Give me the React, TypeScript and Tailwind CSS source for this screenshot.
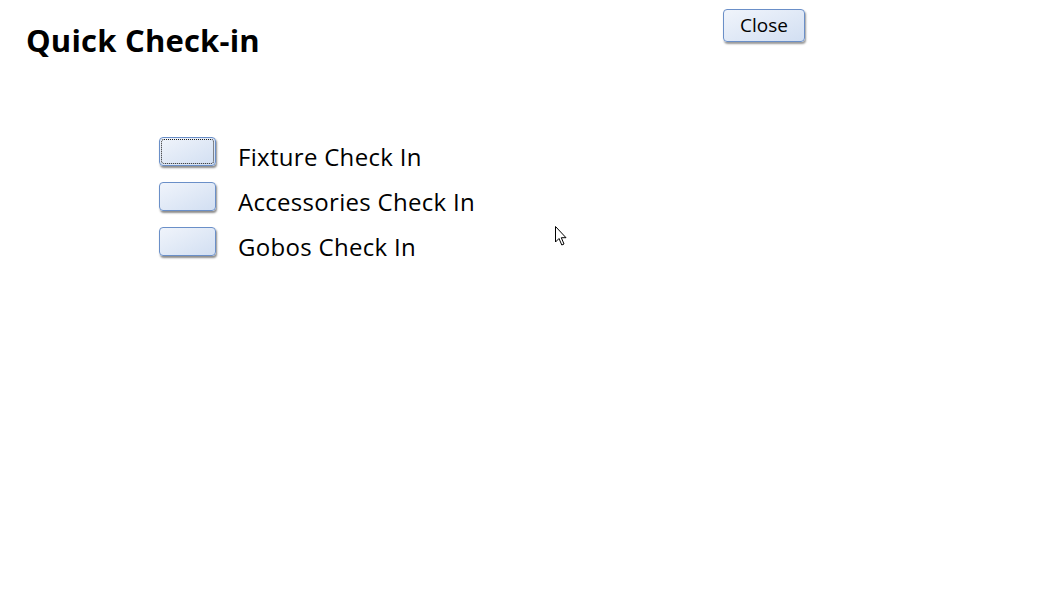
import React from "react";

const font = { fontFamily: '"Open Sans", "Noto Sans", sans-serif' };

function Btn({ focused }: { focused?: boolean }) {
  return (
    <div className="relative w-[57px] h-[29px] rounded-[4px] border border-[#6a8fc8] bg-gradient-to-br from-[#f0f4fb] to-[#d2dff2] shadow-[1px_2px_2px_rgba(0,0,0,0.45)]">
      {focused && (
        <div className="absolute inset-[1px] rounded-[3px] border border-dotted border-[#222]" />
      )}
    </div>
  );
}

export default function App() {
  const rows = ["Fixture Check In", "Accessories Check In", "Gobos Check In"];
  return (
    <div className="relative w-[1045px] h-[614px] bg-white text-black" style={font}>
      <div className="flex">
        <div className="w-[723px] pl-[26px] pt-[19px]">
          <h1 className="text-[31px] font-bold leading-[42px] tracking-[0.2px]">Quick Check-in</h1>
        </div>
        <button className="mt-[9px] w-[82px] h-[33px] rounded-[4px] border border-[#6a8fc8] bg-gradient-to-br from-[#f0f4fb] to-[#d2dff2] shadow-[1px_2px_2px_rgba(0,0,0,0.4)] text-[19px] leading-none pb-[1px]">
          Close
        </button>
      </div>
      <div className="ml-[159px] mt-[76px] flex flex-col gap-[16px]">
        {rows.map((r, i) => (
          <div key={r} className="flex items-center h-[29px]">
            <Btn focused={i === 0} />
            <span className="relative top-[5px] ml-[22px] text-[24px] leading-[29px] tracking-[0.3px]">{r}</span>
          </div>
        ))}
      </div>
      <svg className="absolute left-[555px] top-[226px]" width="14" height="22" viewBox="0 0 14 22">
        <path d="M0.5 0.5 L0.5 16 L4 12.5 L6.8 19 L9 18 L6.3 11.7 L11 11.7 Z" fill="white" stroke="black" strokeWidth="1" />
      </svg>
    </div>
  );
}
